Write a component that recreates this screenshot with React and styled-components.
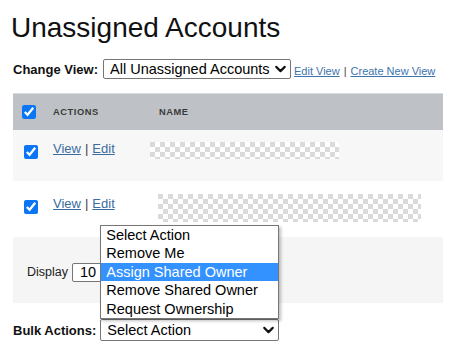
import React from "react";
import styled, { createGlobalStyle } from "styled-components";
import { ChevronDown } from "lucide-react";

const Global = createGlobalStyle`
  html, body { margin: 0; padding: 0; background: #fff; overflow: hidden; }
  body { font-family: Arial, "Liberation Sans", sans-serif; color: #000; }
`;

const Page = styled.div`
  width: 455px;
  height: 351px;
  box-sizing: border-box;
  padding: 12px 12px 0 13px;
`;

const Title = styled.h1`
  margin: 0 0 0 -2px;
  font-size: 28px;
  line-height: 32px;
  font-weight: normal;
  color: #111;
`;

const ViewBar = styled.div`
  margin-top: 15px;
  display: flex;
  align-items: center;
  height: 20px;
`;

const Label = styled.span`
  font-size: 13px;
  font-weight: bold;
  color: #111;
  margin-right: ${(p) => p.gap || 5}px;
`;

const SelectWrap = styled.div`
  position: relative;
  width: ${(p) => p.w}px;
  height: ${(p) => p.h}px;
  flex: none;
`;

const NativeSelect = styled.select`
  appearance: none;
  -webkit-appearance: none;
  width: 100%;
  height: 100%;
  box-sizing: border-box;
  border: 1px solid #767676;
  border-radius: 2px;
  background: #fff;
  margin: 0;
  padding: 0 0 0 ${(p) => p.pl || 6}px;
  font-family: Arial, "Liberation Sans", sans-serif;
  font-size: ${(p) => p.fs || 14.5}px;
  color: #000;
  outline: none;
`;

const Chevron = styled(ChevronDown)`
  position: absolute;
  right: ${(p) => p.$r}px;
  top: 50%;
  transform: translateY(-50%);
  pointer-events: none;
  color: #111;
`;

const SmallLink = styled.a`
  font-size: 11px;
  color: #3d74ab;
  text-decoration: underline;
  cursor: pointer;
`;

const Sep = styled.span`
  font-size: ${(p) => p.fs || 11}px;
  color: #444;
  margin: 0 4px;
`;

const LinkGroup = styled.div`
  display: flex;
  align-items: baseline;
  margin-left: 3px;
  padding-top: 3px;
`;

const Table = styled.div`
  margin-top: 14px;
  width: 430px;
`;

const HeaderRow = styled.div`
  display: grid;
  grid-template-columns: 40px 106px 1fr;
  align-items: center;
  height: 37px;
  box-sizing: border-box;
  background: #bec2c6;
  border-top: 1px solid #d8dbde;
`;

const HeadCell = styled.div`
  font-size: 9.3px;
  font-weight: bold;
  letter-spacing: 0.55px;
  color: #3a3a3a;
  padding-left: ${(p) => p.pl || 0}px;
`;

const Row = styled.div`
  display: grid;
  grid-template-columns: 40px 97px 1fr;
  align-items: start;
  height: ${(p) => p.h}px;
  box-sizing: border-box;
  padding-top: ${(p) => p.pt}px;
  background: ${(p) => (p.shade ? "#f7f7f7" : "#fff")};
`;

const CheckCell = styled.div`
  padding-left: ${(p) => p.pl}px;
  padding-top: ${(p) => p.pt || 0}px;
  display: flex;
`;

const Check = styled.input.attrs({ type: "checkbox" })`
  width: 14px;
  height: 14px;
  margin: 0;
  accent-color: #0b76f5;
`;

const ActionLinks = styled.div`
  padding-top: ${(p) => p.pt || 0}px;
  font-size: 13px;
  line-height: 15px;
  white-space: nowrap;
`;

const RowLink = styled.a`
  color: #3a6c9f;
  text-decoration: underline;
  cursor: pointer;
`;

const Redacted = styled.div`
  margin-left: ${(p) => p.ml || 0}px;
  margin-top: ${(p) => p.mt || 0}px;
  width: ${(p) => p.w}px;
  height: ${(p) => p.h}px;
  background: repeating-conic-gradient(#fff 0 25%, #dadada 0 50%) 0 0 / 10px 10px;
`;

const Footer = styled.div`
  height: 66px;
  background: #f5f5f5;
  display: flex;
  align-items: center;
  padding-left: 14px;
  padding-top: 4px;
  box-sizing: border-box;
`;

const FooterText = styled.span`
  font-size: 12.5px;
  color: #222;
  margin-right: 4px;
`;

const BulkBar = styled.div`
  margin-top: 16px;
  display: flex;
  align-items: center;
  height: 22px;
`;

const Popup = styled.ul`
  position: absolute;
  left: 0;
  bottom: 100%;
  width: 179px;
  margin: 0;
  padding: 0;
  list-style: none;
  box-sizing: border-box;
  border: 1px solid #767676;
  background: #fff;
  box-shadow: 2px 2px 3px rgba(0, 0, 0, 0.25);
  z-index: 5;
`;

const Option = styled.li`
  height: 18.4px;
  line-height: 18.4px;
  padding-left: 5px;
  font-size: 14.5px;
  color: ${(p) => (p.active ? "#fff" : "#000")};
  background: ${(p) => (p.active ? "#3392ff" : "transparent")};
  white-space: nowrap;
`;

const actions = [
  "Select Action",
  "Remove Me",
  "Assign Shared Owner",
  "Remove Shared Owner",
  "Request Ownership",
];

function Select({ w, h, value, options, fs, pl }) {
  return (
    <SelectWrap w={w} h={h}>
      <NativeSelect defaultValue={value} fs={fs} pl={pl}>
        {options.map((o) => (
          <option key={o}>{o}</option>
        ))}
      </NativeSelect>
      <Chevron size={17} strokeWidth={3} $r={2} />
    </SelectWrap>
  );
}

export default function App() {
  return (
    <Page>
      <Global />
      <Title>Unassigned Accounts</Title>
      <ViewBar>
        <Label>Change View:</Label>
        <Select w={188} h={20} value="All Unassigned Accounts" options={["All Unassigned Accounts"]} />
        <LinkGroup>
          <SmallLink>Edit View</SmallLink>
          <Sep>|</Sep>
          <SmallLink>Create New View</SmallLink>
        </LinkGroup>
      </ViewBar>

      <Table>
        <HeaderRow>
          <CheckCell pl={9}>
            <Check defaultChecked />
          </CheckCell>
          <HeadCell>ACTIONS</HeadCell>
          <HeadCell>NAME</HeadCell>
        </HeaderRow>

        <Row shade h={51} pt={11}>
          <CheckCell pl={11} pt={4}>
            <Check defaultChecked />
          </CheckCell>
          <ActionLinks>
            <RowLink>View</RowLink>
            <Sep fs={13}>|</Sep>
            <RowLink>Edit</RowLink>
          </ActionLinks>
          <Redacted w={189} h={17} mt={1} />
        </Row>

        <Row h={56} pt={13}>
          <CheckCell pl={11} pt={6}>
            <Check defaultChecked />
          </CheckCell>
          <ActionLinks pt={2}>
            <RowLink>View</RowLink>
            <Sep fs={13}>|</Sep>
            <RowLink>Edit</RowLink>
          </ActionLinks>
          <Redacted w={263} h={28} ml={8} />
        </Row>

        <Footer>
          <FooterText>Display</FooterText>
          <Select w={50} h={19} value="10" options={["10", "25", "50"]} fs={14.5} pl={7} />
        </Footer>
      </Table>

      <BulkBar>
        <Label gap={4}>Bulk Actions:</Label>
        <SelectWrap w={179} h={22}>
          <Popup>
            {actions.map((a) => (
              <Option key={a} active={a === "Assign Shared Owner"}>
                {a}
              </Option>
            ))}
          </Popup>
          <NativeSelect defaultValue="Select Action">
            {actions.map((a) => (
              <option key={a}>{a}</option>
            ))}
          </NativeSelect>
          <Chevron size={17} strokeWidth={3} $r={2} />
        </SelectWrap>
      </BulkBar>
    </Page>
  );
}
